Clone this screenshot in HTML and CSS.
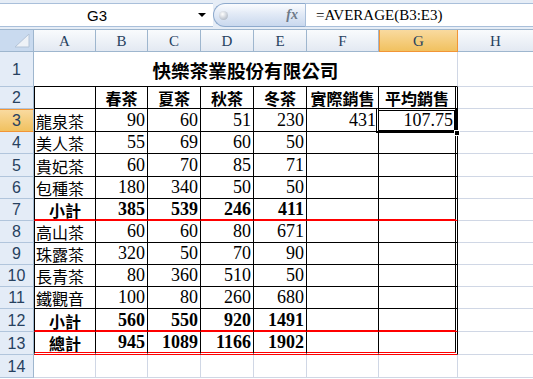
FILE: index.html
```html
<!DOCTYPE html>
<html lang="zh-Hant">
<head>
    <meta charset="UTF-8">
    <meta name="viewport" content="width=device-width, initial-scale=1.0">
    <title>快樂茶業股份有限公司</title>
    <link rel="stylesheet" href="styles.css">
</head>
<body>

    <!-- Name box and formula bar -->
    <div class="formula-bar">
        <div class="name-box">
            <span class="cell-ref">G3</span>
            <span class="drop"></span>
        </div>
        <div class="fx-pill">
            <span class="knob"></span>
            <span class="fx">fx</span>
        </div>
        <div class="formula">=AVERAGE(B3:E3)</div>
    </div>

    <!-- Sheet -->
    <table class="sheet">
        <colgroup>
            <col class="w-rh"><col class="w-a"><col class="w-b"><col class="w-c"><col class="w-d">
            <col class="w-e"><col class="w-f"><col class="w-g"><col class="w-h">
        </colgroup>
        <tr class="cols">
            <th class="corner">
                <svg width="33" height="21" viewBox="0 0 33 21">
                    <polygon points="15,17 29,17 29,4" fill="#eef2f7" stroke="#b4c4d8" stroke-width="1"/>
                </svg>
            </th>
            <th>A</th><th>B</th><th>C</th><th>D</th><th>E</th><th>F</th><th class="sel">G</th><th>H</th>
        </tr>
        <tr class="r1">
            <th>1</th><td colspan="7" class="title">快樂茶業股份有限公司</td><td></td>
        </tr>
        <tr class="t">
            <th>2</th><td></td><td class="hd">春茶</td><td class="hd">夏茶</td><td class="hd">秋茶</td><td class="hd">冬茶</td><td class="hd">實際銷售</td><td class="hd">平均銷售</td><td></td>
        </tr>
        <tr class="t tall">
            <th class="sel">3</th><td class="name">龍泉茶</td><td>90</td><td>60</td><td>51</td><td>230</td><td>431</td>
            <td class="active">107.75<span class="sel-box"></span><span class="handle"></span></td><td></td>
        </tr>
        <tr class="t">
            <th>4</th><td class="name">美人茶</td><td>55</td><td>69</td><td>60</td><td>50</td><td></td><td></td><td></td>
        </tr>
        <tr class="t tall">
            <th>5</th><td class="name">貴妃茶</td><td>60</td><td>70</td><td>85</td><td>71</td><td></td><td></td><td></td>
        </tr>
        <tr class="t">
            <th>6</th><td class="name">包種茶</td><td>180</td><td>340</td><td>50</td><td>50</td><td></td><td></td><td></td>
        </tr>
        <tr class="t sub">
            <th>7</th><td class="lbl">小計</td><td>385</td><td>539</td><td>246</td><td>411</td><td></td><td></td><td></td>
        </tr>
        <tr class="t">
            <th>8</th><td class="name">高山茶</td><td>60</td><td>60</td><td>80</td><td>671</td><td></td><td></td><td></td>
        </tr>
        <tr class="t">
            <th>9</th><td class="name">珠露茶</td><td>320</td><td>50</td><td>70</td><td>90</td><td></td><td></td><td></td>
        </tr>
        <tr class="t">
            <th>10</th><td class="name">長青茶</td><td>80</td><td>360</td><td>510</td><td>50</td><td></td><td></td><td></td>
        </tr>
        <tr class="t">
            <th>11</th><td class="name">鐵觀音</td><td>100</td><td>80</td><td>260</td><td>680</td><td></td><td></td><td></td>
        </tr>
        <tr class="t sub tall">
            <th>12</th><td class="lbl">小計</td><td>560</td><td>550</td><td>920</td><td>1491</td><td></td><td></td><td></td>
        </tr>
        <tr class="t total tall">
            <th>13</th><td class="lbl">總計</td><td>945</td><td>1089</td><td>1166</td><td>1902</td><td></td><td></td><td></td>
        </tr>
        <tr class="tall">
            <th>14</th><td></td><td></td><td></td><td></td><td></td><td></td><td></td><td></td>
        </tr>
    </table>

</body>
</html>
```

FILE: styles.css
```css
/* Reset */
* {
    margin: 0;
    padding: 0;
    box-sizing: border-box;
}
body {
    width: 533px;
    height: 379px;
    overflow: hidden;
    background-color: #fff;
    font-family: "Liberation Serif", "Noto Sans CJK TC", serif;
    color: #000;
}

/* Formula bar */
.formula-bar {
    display: flex;
    height: 30px;
    padding: 3px 0 2px;
    background-color: #e6edf6;
    border-bottom: 1px solid #9eb6ce;
}
.name-box {
    width: 213px;
    display: flex;
    align-items: center;
    background-color: #fff;
    border-top: 1px solid #a9bfda;
    border-bottom: 1px solid #a9bfda;
}
.cell-ref {
    flex: 1;
    text-align: center;
    font-family: "Liberation Sans", sans-serif;
    font-size: 15px;
    padding-right: 4px;
}
.drop {
    width: 0;
    height: 0;
    margin-right: 7px;
    border-left: 4px solid transparent;
    border-right: 4px solid transparent;
    border-top: 4px solid #000;
}
.fx-pill {
    width: 92px;
    display: flex;
    align-items: center;
    justify-content: space-between;
    padding: 0 7px 0 5px;
    border: 1px solid #8eaacd;
    border-right: none;
    border-radius: 12px 0 0 12px;
    background: linear-gradient(#fbfcfe, #e2eaf6 45%, #c9d8ee);
}
.knob {
    width: 9px;
    height: 9px;
    border-radius: 50%;
    background: radial-gradient(circle at 40% 35%, #ffffff, #b9c1cc 70%, #98a2ae);
}
.fx {
    font-family: "Liberation Serif", serif;
    font-style: italic;
    font-weight: bold;
    font-size: 14px;
    color: #6e7a88;
}
.formula {
    flex: 1;
    display: flex;
    align-items: center;
    padding-left: 10px;
    background-color: #fff;
    border: 1px solid #a9bfda;
    border-right: none;
    font-size: 15px;
}

/* Sheet grid */
.sheet {
    table-layout: fixed;
    border-collapse: separate;
    border-spacing: 0;
    width: 534px;
}
.w-rh { width: 34px; }
.w-a { width: 62px; }
.w-b { width: 52px; }
.w-c { width: 53px; }
.w-d { width: 53px; }
.w-e { width: 53px; }
.w-f { width: 72px; }
.w-g { width: 79px; }
.w-h { width: 76px; }

.sheet tr { height: 22px; }
.sheet tr.tall { height: 23px; }
.sheet tr.r1 { height: 35px; }

.sheet th {
    font-weight: normal;
    color: #27415f;
    border-right: 1px solid #9eb6ce;
    border-bottom: 1px solid #b1c5dc;
    background-color: #e4ecf7;
    font-family: "Liberation Sans", sans-serif;
    font-size: 16px;
    line-height: 18px;
    text-align: center;
    vertical-align: middle;
    padding-top: 1px;
}
.sheet .cols th {
    font-family: "Liberation Serif", serif;
    font-size: 15px;
    border-bottom-color: #9eb6ce;
    background: linear-gradient(#f9fbfd, #e3e9f2);
}
.sheet .cols th.corner {
    background: #c9daef;
    padding: 0;
    vertical-align: top;
}
.corner svg {
    display: block;
}
.sheet th.sel {
    background: linear-gradient(#f9da9f, #f1c15f);
    border-bottom: 1px solid #f29536;
    border-top: 1px solid #f29536;
}
.sheet .cols th.sel {
    border-left: 1px solid #f29536;
    border-right-color: #f29536;
    border-top: none;
}

.sheet td {
    border-right: 1px solid #d0d7e5;
    border-bottom: 1px solid #d0d7e5;
    font-size: 18px;
    line-height: 19px;
    text-align: right;
    vertical-align: bottom;
    padding: 0 2px 1px 2px;
    white-space: nowrap;
}

/* Title */
.sheet td.title {
    border-bottom-color: #000;
    text-align: center;
    vertical-align: middle;
    font-family: "Noto Sans CJK TC", sans-serif;
    font-weight: bold;
    font-size: 18.6px;
    line-height: 24px;
    padding: 2px 0 0 0;
}

/* Table borders */
.t td {
    border-right-color: #000;
    border-bottom-color: #000;
}
.t td:nth-child(2) {
    border-left: 1px solid #000;
}
.t td:nth-child(8) {
    border-right: 3px double #000;
}
.t td:nth-child(9) {
    border-right-color: #d0d7e5;
    border-bottom-color: #d0d7e5;
}
.sub td {
    border-bottom: 2px solid #f00;
    padding-bottom: 0;
    font-weight: bold;
}
.total td {
    border-bottom: 3px double #f00;
    padding-bottom: 0;
    font-weight: bold;
}
.sub td:nth-child(9),
.total td:nth-child(9) {
    border-bottom: 1px solid #d0d7e5;
}

/* Cell kinds */
.sheet td.hd,
.sheet td.lbl {
    text-align: center;
    font-family: "Noto Sans CJK TC", sans-serif;
    font-weight: bold;
    font-size: 16px;
    line-height: 18px;
    padding-left: 0;
    padding-right: 0;
}
.sheet td.name {
    text-align: left;
    font-family: "Noto Sans CJK TC", sans-serif;
    font-size: 16px;
    line-height: 18px;
    padding-left: 1px;
}

/* Active cell */
.sheet td.active {
    position: relative;
}
.sel-box {
    position: absolute;
    left: -3px;
    right: -2px;
    top: -1px;
    bottom: -2px;
    border: 3px double #000;
}
.handle {
    position: absolute;
    right: -5px;
    bottom: -5px;
    width: 6px;
    height: 6px;
    background-color: #000;
    border: 1px solid #fff;
}
```
